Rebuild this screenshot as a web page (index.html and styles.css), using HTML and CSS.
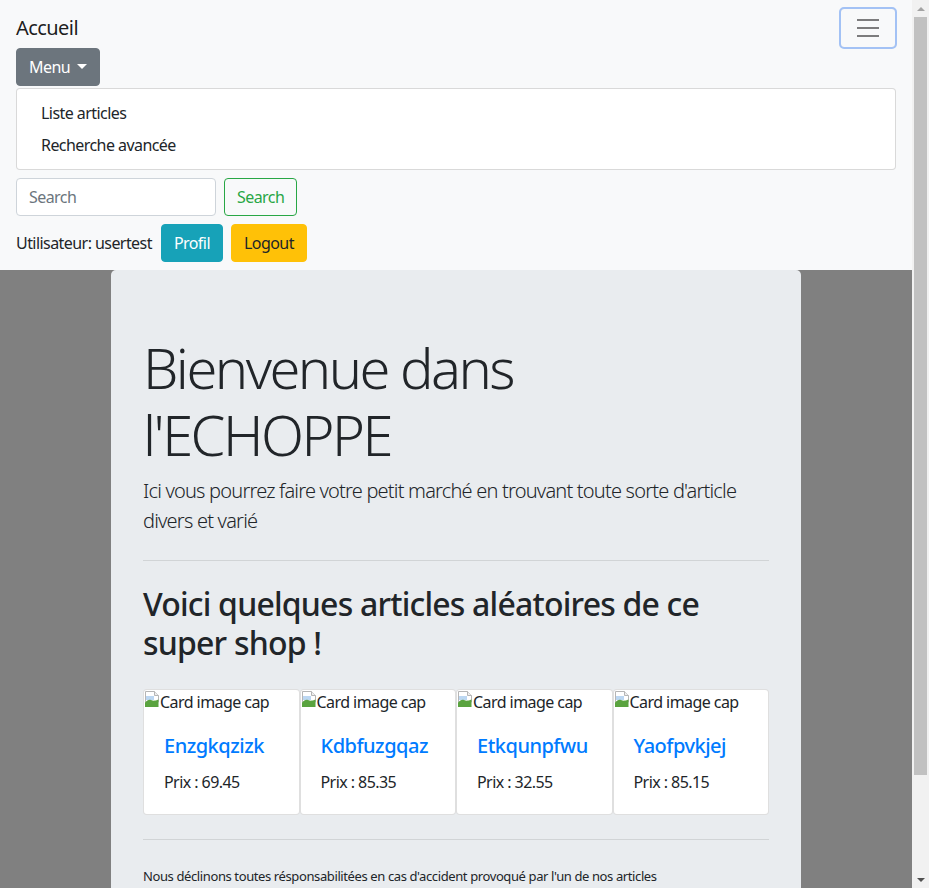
FILE: index.html
```html
<!DOCTYPE html>
<html lang="fr">
<head>
<meta charset="utf-8">
<title>L'ECHOPPE</title>
<link rel="stylesheet" href="styles.css">
</head>
<body>
<div class="page">
<nav class="navbar">
  <div class="navbar-top">
    <a class="brand" href="#">Accueil</a>
    <button class="toggler" type="button" aria-label="Toggle navigation">
      <svg width="30" height="30" viewBox="0 0 30 30"><path d="M4 7h22M4 15h22M4 23h22" stroke="rgba(0,0,0,0.5)" stroke-width="2" stroke-linecap="butt"/></svg>
    </button>
  </div>
  <div class="collapse">
    <div class="dropdown">
      <button class="btn btn-secondary" type="button">Menu<span class="caret"></span></button>
      <div class="dropdown-menu">
        <a class="dropdown-item" href="#">Liste articles</a>
        <a class="dropdown-item" href="#">Recherche avancée</a>
      </div>
    </div>
    <form class="search-form">
      <input class="form-control" type="search" placeholder="Search">
      <button class="btn btn-outline-success" type="button">Search</button>
    </form>
    <div class="user-row">
      <span class="user-text">Utilisateur: usertest</span>
      <button class="btn btn-info" type="button">Profil</button>
      <button class="btn btn-warning" type="button">Logout</button>
    </div>
  </div>
</nav>
<main class="container">
  <section class="jumbotron">
    <h1 class="display">Bienvenue dans l'ECHOPPE</h1>
    <p class="lead">Ici vous pourrez faire votre petit marché en trouvant toute sorte d'article divers et varié</p>
    <hr class="sep">
    <h2 class="subtitle">Voici quelques articles aléatoires de ce super shop !</h2>
    <div class="cards">
      <div class="card">
        <div class="card-img"><svg class="broken" width="16" height="16" viewBox="0 0 16 16"><path d="M1.5 0.5h9l4 4v6.5h-13z" fill="#fff" stroke="#b5b5b5"/><path d="M10.5 0.5v4h4" fill="#eee" stroke="#b5b5b5"/><path d="M2 5h8v4H2z" fill="#bcd7f2"/><path d="M1 16V11.5c2-2 4-3.5 6-2.5 2 1 4 1 7.5-0.5V16z" fill="#5aa33f"/></svg>Card image cap</div>
        <div class="card-body">
          <h5 class="card-title"><a href="#">Enzgkqzizk</a></h5>
          <p class="card-text">Prix : 69.45</p>
        </div>
      </div>
      <div class="card">
        <div class="card-img"><svg class="broken" width="16" height="16" viewBox="0 0 16 16"><path d="M1.5 0.5h9l4 4v6.5h-13z" fill="#fff" stroke="#b5b5b5"/><path d="M10.5 0.5v4h4" fill="#eee" stroke="#b5b5b5"/><path d="M2 5h8v4H2z" fill="#bcd7f2"/><path d="M1 16V11.5c2-2 4-3.5 6-2.5 2 1 4 1 7.5-0.5V16z" fill="#5aa33f"/></svg>Card image cap</div>
        <div class="card-body">
          <h5 class="card-title"><a href="#">Kdbfuzgqaz</a></h5>
          <p class="card-text">Prix : 85.35</p>
        </div>
      </div>
      <div class="card">
        <div class="card-img"><svg class="broken" width="16" height="16" viewBox="0 0 16 16"><path d="M1.5 0.5h9l4 4v6.5h-13z" fill="#fff" stroke="#b5b5b5"/><path d="M10.5 0.5v4h4" fill="#eee" stroke="#b5b5b5"/><path d="M2 5h8v4H2z" fill="#bcd7f2"/><path d="M1 16V11.5c2-2 4-3.5 6-2.5 2 1 4 1 7.5-0.5V16z" fill="#5aa33f"/></svg>Card image cap</div>
        <div class="card-body">
          <h5 class="card-title"><a href="#">Etkqunpfwu</a></h5>
          <p class="card-text">Prix : 32.55</p>
        </div>
      </div>
      <div class="card">
        <div class="card-img"><svg class="broken" width="16" height="16" viewBox="0 0 16 16"><path d="M1.5 0.5h9l4 4v6.5h-13z" fill="#fff" stroke="#b5b5b5"/><path d="M10.5 0.5v4h4" fill="#eee" stroke="#b5b5b5"/><path d="M2 5h8v4H2z" fill="#bcd7f2"/><path d="M1 16V11.5c2-2 4-3.5 6-2.5 2 1 4 1 7.5-0.5V16z" fill="#5aa33f"/></svg>Card image cap</div>
        <div class="card-body">
          <h5 class="card-title"><a href="#">Yaofpvkjej</a></h5>
          <p class="card-text">Prix : 85.15</p>
        </div>
      </div>
    </div>
    <hr class="sep">
    <p class="footer-note">Nous déclinons toutes résponsabilitées en cas d'accident provoqué par l'un de nos articles</p>
  </section>
</main>
</div>
<div class="scrollbar" aria-hidden="true">
  <div class="sb-btn"><span class="arrow-up"></span></div>
  <div class="sb-thumb"></div>
  <div class="sb-track"></div>
  <div class="sb-btn"><span class="arrow-down"></span></div>
</div>
</body>
</html>
```
FILE: styles.css
```css
* { box-sizing: border-box; }
html { font-size: 16px; }
body {
  margin: 0;
  height: 100vh;
  overflow: hidden;
  display: flex;
  background: #808080;
  color: #212529;
  font-family: "Noto Sans", "Open Sans", sans-serif;
  font-size: 16px;
  line-height: 1.5;
  letter-spacing: -0.035em;
}
a { text-decoration: none; }

.page {
  flex: 1 1 auto;
  min-width: 0;
  overflow: hidden;
  background: #808080;
}

/* fake classic scrollbar */
.scrollbar {
  flex: none;
  width: 17px;
  background: #f1f1f1;
  display: flex;
  flex-direction: column;
  align-items: center;
}
.sb-btn {
  height: 17px;
  width: 17px;
  display: flex;
  align-items: center;
  justify-content: center;
}
.arrow-up {
  border-bottom: 4px solid #a3a3a3;
  border-left: 4px solid transparent;
  border-right: 4px solid transparent;
}
.arrow-down {
  border-top: 4px solid #505050;
  border-left: 4px solid transparent;
  border-right: 4px solid transparent;
}
.sb-thumb {
  width: 13px;
  height: 758px;
  background: #c1c1c1;
}
.sb-track { flex: 1; }

.navbar {
  background: #f8f9fa;
  padding: 8px 16px;
}
.navbar-top {
  display: flex;
  justify-content: space-between;
  align-items: center;
}
.brand {
  color: rgba(0,0,0,0.9);
  font-size: 20px;
  line-height: 30px;
  padding: 5px 0;
}
.toggler {
  width: 56px;
  height: 40px;
  padding: 4px 12px;
  background: transparent;
  border: 1px solid rgba(0,0,0,0.1);
  border-radius: 4px;
  outline: 2px solid #a3c2f5;
  outline-offset: -1px;
  display: flex;
  align-items: center;
  justify-content: center;
}
.toggler svg { display: block; }

.btn {
  font-family: inherit;
  font-size: 16px;
  line-height: 24px;
  letter-spacing: inherit;
  padding: 6px 12px;
  border: 1px solid transparent;
  border-radius: 4px;
  cursor: pointer;
}
.btn-secondary { background: #6c757d; border-color: #6c757d; color: #fff; }
.btn-info { background: #17a2b8; border-color: #17a2b8; color: #fff; }
.btn-warning { background: #ffc107; border-color: #ffc107; color: #212529; }
.btn-outline-success { background: transparent; border-color: #28a745; color: #28a745; }

.caret {
  display: inline-block;
  margin-left: 7px;
  vertical-align: 4px;
  border-top: 5px solid #fff;
  border-left: 5px solid transparent;
  border-right: 5px solid transparent;
}
.dropdown-menu {
  margin-top: 2px;
  background: #fff;
  border: 1px solid rgba(0,0,0,0.15);
  border-radius: 4px;
  padding: 8px 0;
}
.dropdown-item {
  display: block;
  padding: 4px 24px;
  color: #212529;
  line-height: 24px;
}

.search-form {
  display: flex;
  gap: 8px;
  margin: 8px 0;
}
.form-control {
  width: 200px;
  height: 38px;
  padding: 6px 12px;
  font-family: inherit;
  font-size: 16px;
  letter-spacing: inherit;
  border: 1px solid #ced4da;
  border-radius: 4px;
  color: #495057;
  background: #fff;
}
.form-control::placeholder { color: #6c757d; }

.user-row {
  display: flex;
  align-items: center;
  gap: 8px;
}
.user-text { margin-right: 1px; }

.container {
  width: 720px;
  margin: 0 auto;
  padding: 0 15px;
}
.jumbotron {
  background: #e9ecef;
  border-radius: 5px;
  padding: 64px 32px 40px;
}
.display {
  margin: 0 0 8px;
  font-size: 56px;
  font-weight: 300;
  line-height: 1.2;
  letter-spacing: -0.045em;
}
.lead {
  margin: 0;
  font-size: 20px;
  font-weight: 300;
  line-height: 30px;
  letter-spacing: -0.04em;
}
.sep {
  margin: 24px 0;
  border: 0;
  border-top: 1px solid rgba(0,0,0,0.1);
}
.subtitle {
  margin: 0;
  font-size: 32px;
  font-weight: 500;
  line-height: 1.2;
  letter-spacing: -0.025em;
}
.cards {
  display: flex;
  margin-top: 27px;
}
.card {
  flex: 1 1 0;
  min-width: 0;
  background: #fff;
  border: 1px solid rgba(0,0,0,0.125);
  border-radius: 4px;
}
.card-img {
  display: flex;
  align-items: flex-start;
  line-height: 24px;
  white-space: nowrap;
  overflow: hidden;
}
.broken { flex: none; margin-top: 1px; }
.card-body { padding: 20px; }
.card-title {
  margin: 0 0 12px;
  font-size: 20px;
  font-weight: 500;
  line-height: 1.2;
  letter-spacing: -0.025em;
}
.card-title a { color: #007bff; }
.card-text { margin: 0; }
.footer-note {
  margin: 26px 0 0;
  font-size: 13px;
  line-height: 20px;
  letter-spacing: -0.03em;
}
```
